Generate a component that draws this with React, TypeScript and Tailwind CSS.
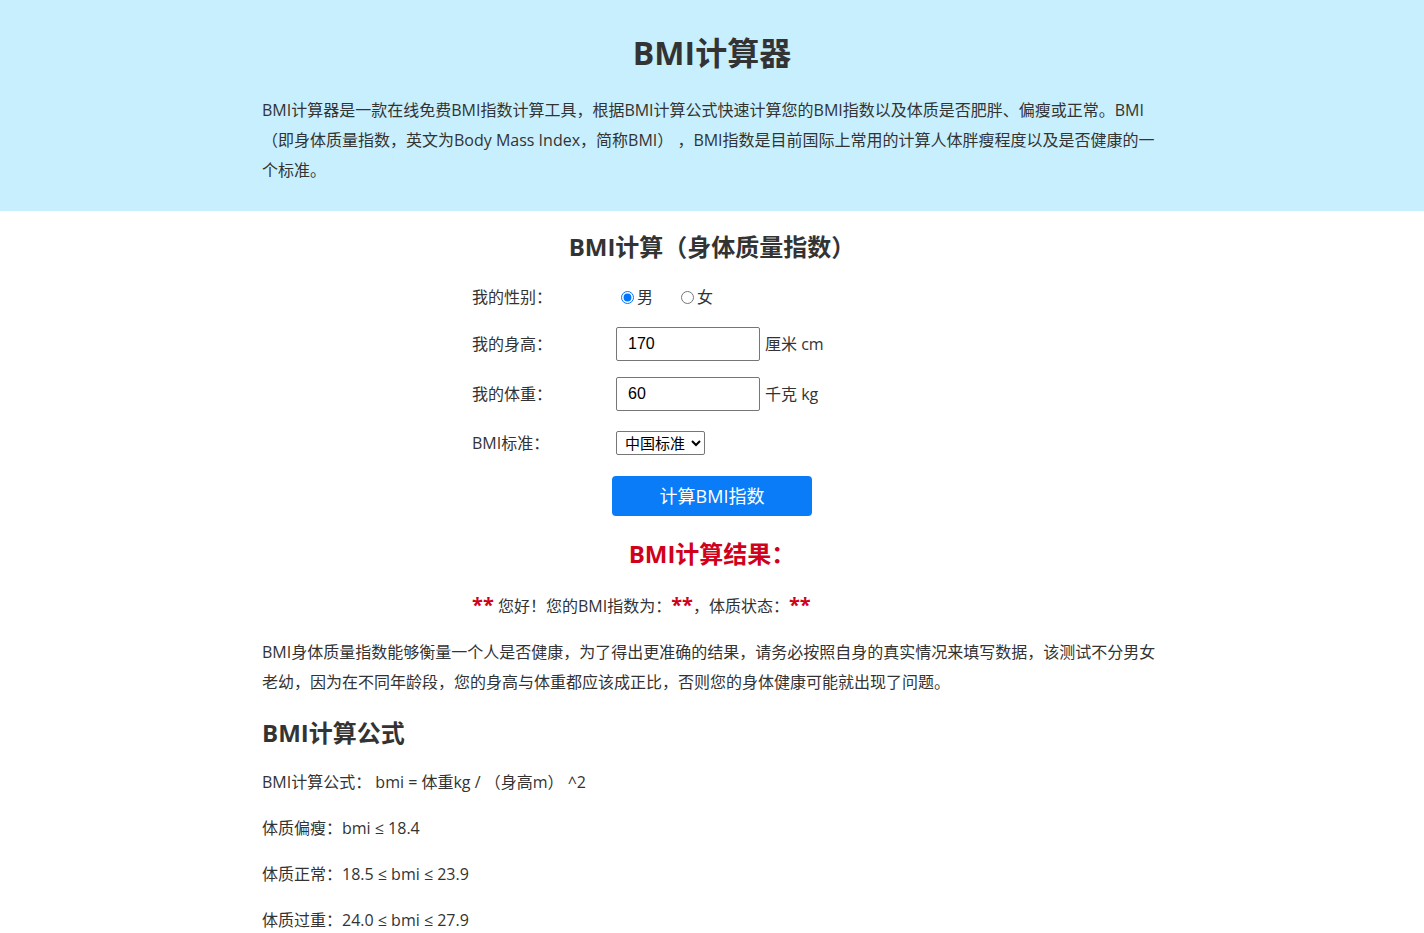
import React, { useState } from "react";

const font = "font-['Segoe_UI','Open_Sans','Noto_Sans_CJK_SC',sans-serif]";

const App: React.FC = () => {
  const [sex, setSex] = useState("m");
  const [height, setHeight] = useState("170");
  const [weight, setWeight] = useState("60");

  return (
    <div className={`min-h-screen bg-white text-[#333] ${font}`}>
      {/* header */}
      <div className="bg-[#c8effd] pt-[30px] pb-[26px]">
        <div className="w-[900px] mx-auto">
          <h1 className="text-center text-[32px] font-bold leading-[46px] text-[#333]">BMI计算器</h1>
          <p className="mt-[19px] text-[16px] leading-[30px]">
            BMI计算器是一款在线免费BMI指数计算工具，根据BMI计算公式快速计算您的BMI指数以及体质是否肥胖、偏瘦或正常。BMI（即身体质量指数，英文为Body Mass Index，简称BMI） ，BMI指数是目前国际上常用的计算人体胖瘦程度以及是否健康的一个标准。
          </p>
        </div>
      </div>

      <div className="w-[900px] mx-auto">
        <h2 className="mt-[19px] text-center text-[24px] font-bold leading-[34px]">BMI计算（身体质量指数）</h2>

        <div className="w-[480px] mx-auto mt-[15px] text-[16px]">
          <div className="flex items-center h-[36px]">
            <span className="w-[144px]">我的性别：</span>
            <label className="flex items-center ml-[5px]">
              <input
                type="radio"
                name="sex"
                checked={sex === "m"}
                onChange={() => setSex("m")}
                className="w-[13px] h-[13px] m-0 mr-[3px] accent-[#0075ff]"
              />
              男
            </label>
            <label className="flex items-center ml-[28px]">
              <input
                type="radio"
                name="sex"
                checked={sex === "f"}
                onChange={() => setSex("f")}
                className="w-[13px] h-[13px] m-0 mr-[3px]"
              />
              女
            </label>
          </div>

          <div className="flex items-center mt-[11px] h-[36px]">
            <span className="w-[144px]">我的身高：</span>
            <input
              value={height}
              onChange={(e) => setHeight(e.target.value)}
              className="w-[144px] h-[34px] border border-[#767676] rounded-[2px] px-[11px] text-[16px] font-['Liberation_Sans',Arial,sans-serif] text-black"
            />
            <span className="ml-[5px]">厘米 cm</span>
          </div>

          <div className="flex items-center mt-[14px] h-[36px]">
            <span className="w-[144px]">我的体重：</span>
            <input
              value={weight}
              onChange={(e) => setWeight(e.target.value)}
              className="w-[144px] h-[34px] border border-[#767676] rounded-[2px] px-[11px] text-[16px] font-['Liberation_Sans',Arial,sans-serif] text-black"
            />
            <span className="ml-[5px]">千克 kg</span>
          </div>

          <div className="flex items-center mt-[13px] h-[36px]">
            <span className="w-[144px]">BMI标准：</span>
            <select className="h-[24px] border border-[#767676] rounded-[2px] text-[15px] text-black bg-white pl-[4px] pr-[2px]">
              <option>中国标准</option>
              <option>国际标准</option>
            </select>
          </div>

          <button className="block ml-[140px] mt-[15px] w-[200px] h-[40px] rounded-[4px] bg-[#0a7cf7] text-white text-[18px]">
            计算BMI指数
          </button>

          <h3 className="mt-[21px] -ml-[210px] w-[900px] text-center text-[24px] font-bold leading-[34px] text-[#d0021b]">
            BMI计算结果：
          </h3>
          <p className="mt-[21px] text-[16px] leading-[26px]">
            <span className="text-[#d0021b] font-bold text-[20px]">**</span> 您好！您的BMI指数为：
            <span className="text-[#d0021b] font-bold text-[20px]">**</span>，体质状态：
            <span className="text-[#d0021b] font-bold text-[20px]">**</span>
          </p>
        </div>

        <p className="mt-[18px] text-[16px] leading-[30px]">
          BMI身体质量指数能够衡量一个人是否健康，为了得出更准确的结果，请务必按照自身的真实情况来填写数据，该测试不分男女老幼，因为在不同年龄段，您的身高与体重都应该成正比，否则您的身体健康可能就出现了问题。
        </p>

        <h2 className="mt-[19px] text-[24px] font-bold leading-[34px]">BMI计算公式</h2>

        <div className="mt-[20px] text-[16px] leading-[24px] flex flex-col gap-[22px]">
          <p>BMI计算公式： bmi = 体重kg / （身高m） ^2</p>
          <p>体质偏瘦：bmi ≤ 18.4</p>
          <p>体质正常：18.5 ≤ bmi ≤ 23.9</p>
          <p>体质过重：24.0 ≤ bmi ≤ 27.9</p>
        </div>
      </div>
    </div>
  );
};

export default App;
